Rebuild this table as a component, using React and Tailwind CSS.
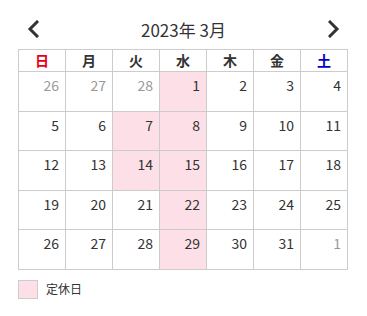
import React from "react";

const pink = "bg-[#fde0e7]";

const weeks = [
  [26, 27, 28, 1, 2, 3, 4],
  [5, 6, 7, 8, 9, 10, 11],
  [12, 13, 14, 15, 16, 17, 18],
  [19, 20, 21, 22, 23, 24, 25],
  [26, 27, 28, 29, 30, 31, 1],
];

const heads = [
  { label: "日", cls: "text-[#e60012]" },
  { label: "月", cls: "text-[#333]" },
  { label: "火", cls: "text-[#333]" },
  { label: "水", cls: "text-[#333]" },
  { label: "木", cls: "text-[#333]" },
  { label: "金", cls: "text-[#333]" },
  { label: "土", cls: "text-[#0000cc]" },
];

const Chevron = ({ dir }) => (
  <svg width="12" height="18" viewBox="0 0 12 18" fill="none">
    <path
      d={dir === "left" ? "M10 2 L3 9 L10 16" : "M2 2 L9 9 L2 16"}
      stroke="#333"
      strokeWidth="3"
      strokeLinecap="square"
    />
  </svg>
);

export default function App() {
  return (
    <div
      className="w-[367px] h-[316px] bg-white px-[18px] text-[#333]"
      style={{ fontFamily: '"Noto Sans CJK JP", "Noto Sans", sans-serif' }}
    >
      {/* Header */}
      <div className="flex items-center justify-between h-[40px] pt-[9px] box-content px-[9px]">
        <Chevron dir="left" />
        <span className="text-[17px] leading-none">2023年 3月</span>
        <Chevron dir="right" />
      </div>

      {/* Calendar */}
      <div className="grid grid-cols-7 w-[330px] border-l border-t border-[#ccc]">
        {heads.map((h) => (
          <div
            key={h.label}
            className={`h-[22px] flex items-center justify-center border-r border-b border-[#ccc] text-[14px] font-bold ${h.cls}`}
          >
            {h.label}
          </div>
        ))}
        {weeks.map((week, wi) =>
          week.map((d, di) => {
            const outside = (wi === 0 && d > 20) || (wi === 4 && d < 10);
            const holiday = (di === 3 && !outside) || (wi === 1 && di === 2) || (wi === 2 && di === 2);
            return (
              <div
                key={`${wi}-${di}`}
                className={`h-[39.6px] border-r border-b border-[#ccc] text-right pr-[6px] pt-[3px] text-[14px] leading-[20px] ${
                  holiday ? pink : ""
                } ${outside ? "text-[#999]" : "text-[#333]"}`}
              >
                {d}
              </div>
            );
          })
        )}
      </div>

      {/* Legend */}
      <div className="flex items-center gap-[8px] mt-[10px]">
        <div className={`w-[20px] h-[19px] border border-[#ccc] ${pink}`} />
        <span className="text-[12px] text-[#333]">定休日</span>
      </div>
    </div>
  );
}
